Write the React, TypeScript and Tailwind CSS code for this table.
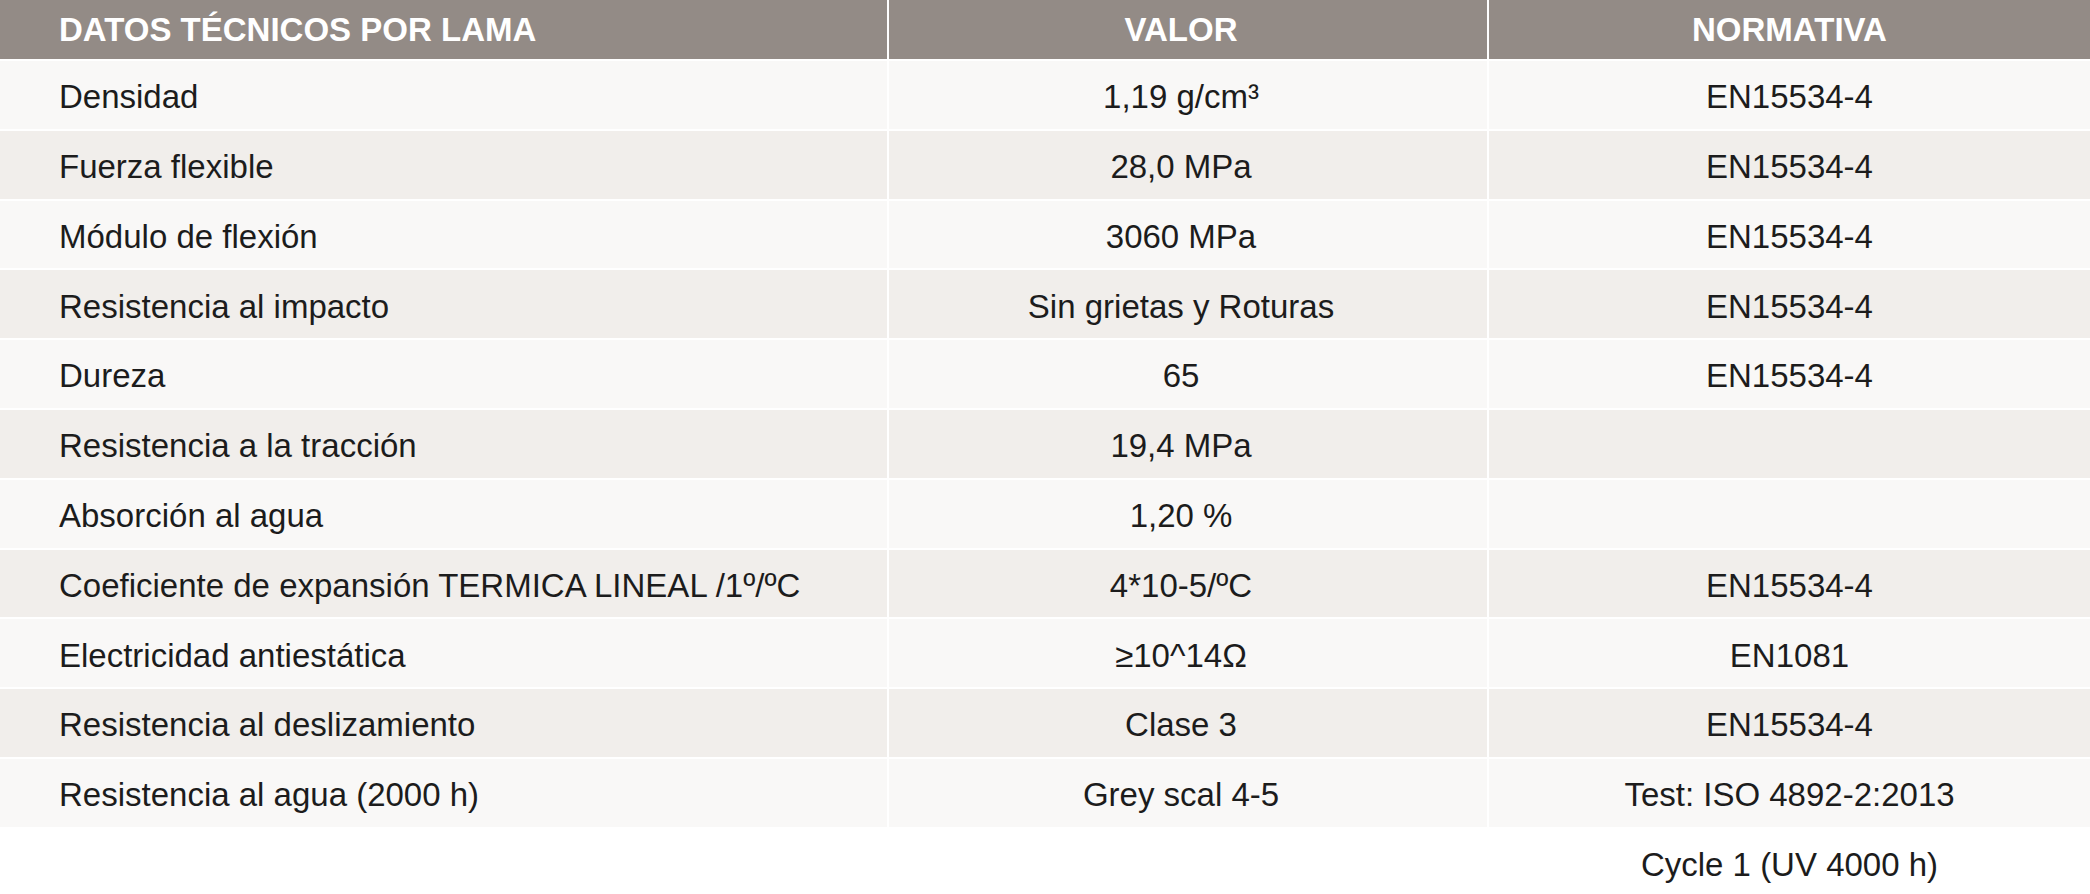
const rows: [string, string, string][] = [
  ["Densidad", "1,19 g/cm³", "EN15534-4"],
  ["Fuerza flexible", "28,0 MPa", "EN15534-4"],
  ["Módulo de flexión", "3060 MPa", "EN15534-4"],
  ["Resistencia al impacto", "Sin grietas y Roturas", "EN15534-4"],
  ["Dureza", "65", "EN15534-4"],
  ["Resistencia a la tracción", "19,4 MPa", ""],
  ["Absorción al agua", "1,20 %", ""],
  ["Coeficiente de expansión TERMICA LINEAL /1º/ºC", "4*10-5/ºC", "EN15534-4"],
  ["Electricidad antiestática", "≥10^14Ω", "EN1081"],
  ["Resistencia al deslizamiento", "Clase 3", "EN15534-4"],
  ["Resistencia al agua (2000 h)", "Grey scal 4-5", "Test: ISO 4892-2:2013"],
];

const App = () => {
  return (
    <div className="w-[2090px] h-[894px] bg-white overflow-hidden font-['Liberation_Sans',Arial,sans-serif] text-[#1c1c1c]">
      <div className="flex flex-col gap-[2px]">
        {/* HEADER */}
        <div className="grid grid-cols-[887px_598px_1fr] gap-x-[2px] h-[59px] text-[33px] font-bold text-white">
          <div className="bg-[#938b86] flex items-center pl-[59px]">DATOS TÉCNICOS POR LAMA</div>
          <div className="bg-[#938b86] flex items-center justify-center pr-[14px]">VALOR</div>
          <div className="bg-[#938b86] flex items-center justify-center">NORMATIVA</div>
        </div>
        {/* ROWS */}
        {rows.map((r, i) => (
          <div
            key={i}
            className={`grid grid-cols-[887px_598px_1fr] gap-x-[2px] h-[67.8px] text-[33px] ${
              i % 2 === 0 ? "[&>div]:bg-[#f9f8f7]" : "[&>div]:bg-[#f1eeeb]"
            }`}
          >
            <div className="flex items-center pl-[59px] pt-[4px]">{r[0]}</div>
            <div className="flex items-center justify-center pr-[14px] pt-[4px]">{r[1]}</div>
            <div className="flex items-center justify-center pt-[4px]">{r[2]}</div>
          </div>
        ))}
        {/* EXTRA LINE */}
        <div className="grid grid-cols-[887px_598px_1fr] gap-x-[2px] h-[67.8px] text-[33px]">
          <div />
          <div />
          <div className="flex items-center justify-center pt-[4px]">Cycle 1 (UV 4000 h)</div>
        </div>
      </div>
    </div>
  );
};

export default App;
